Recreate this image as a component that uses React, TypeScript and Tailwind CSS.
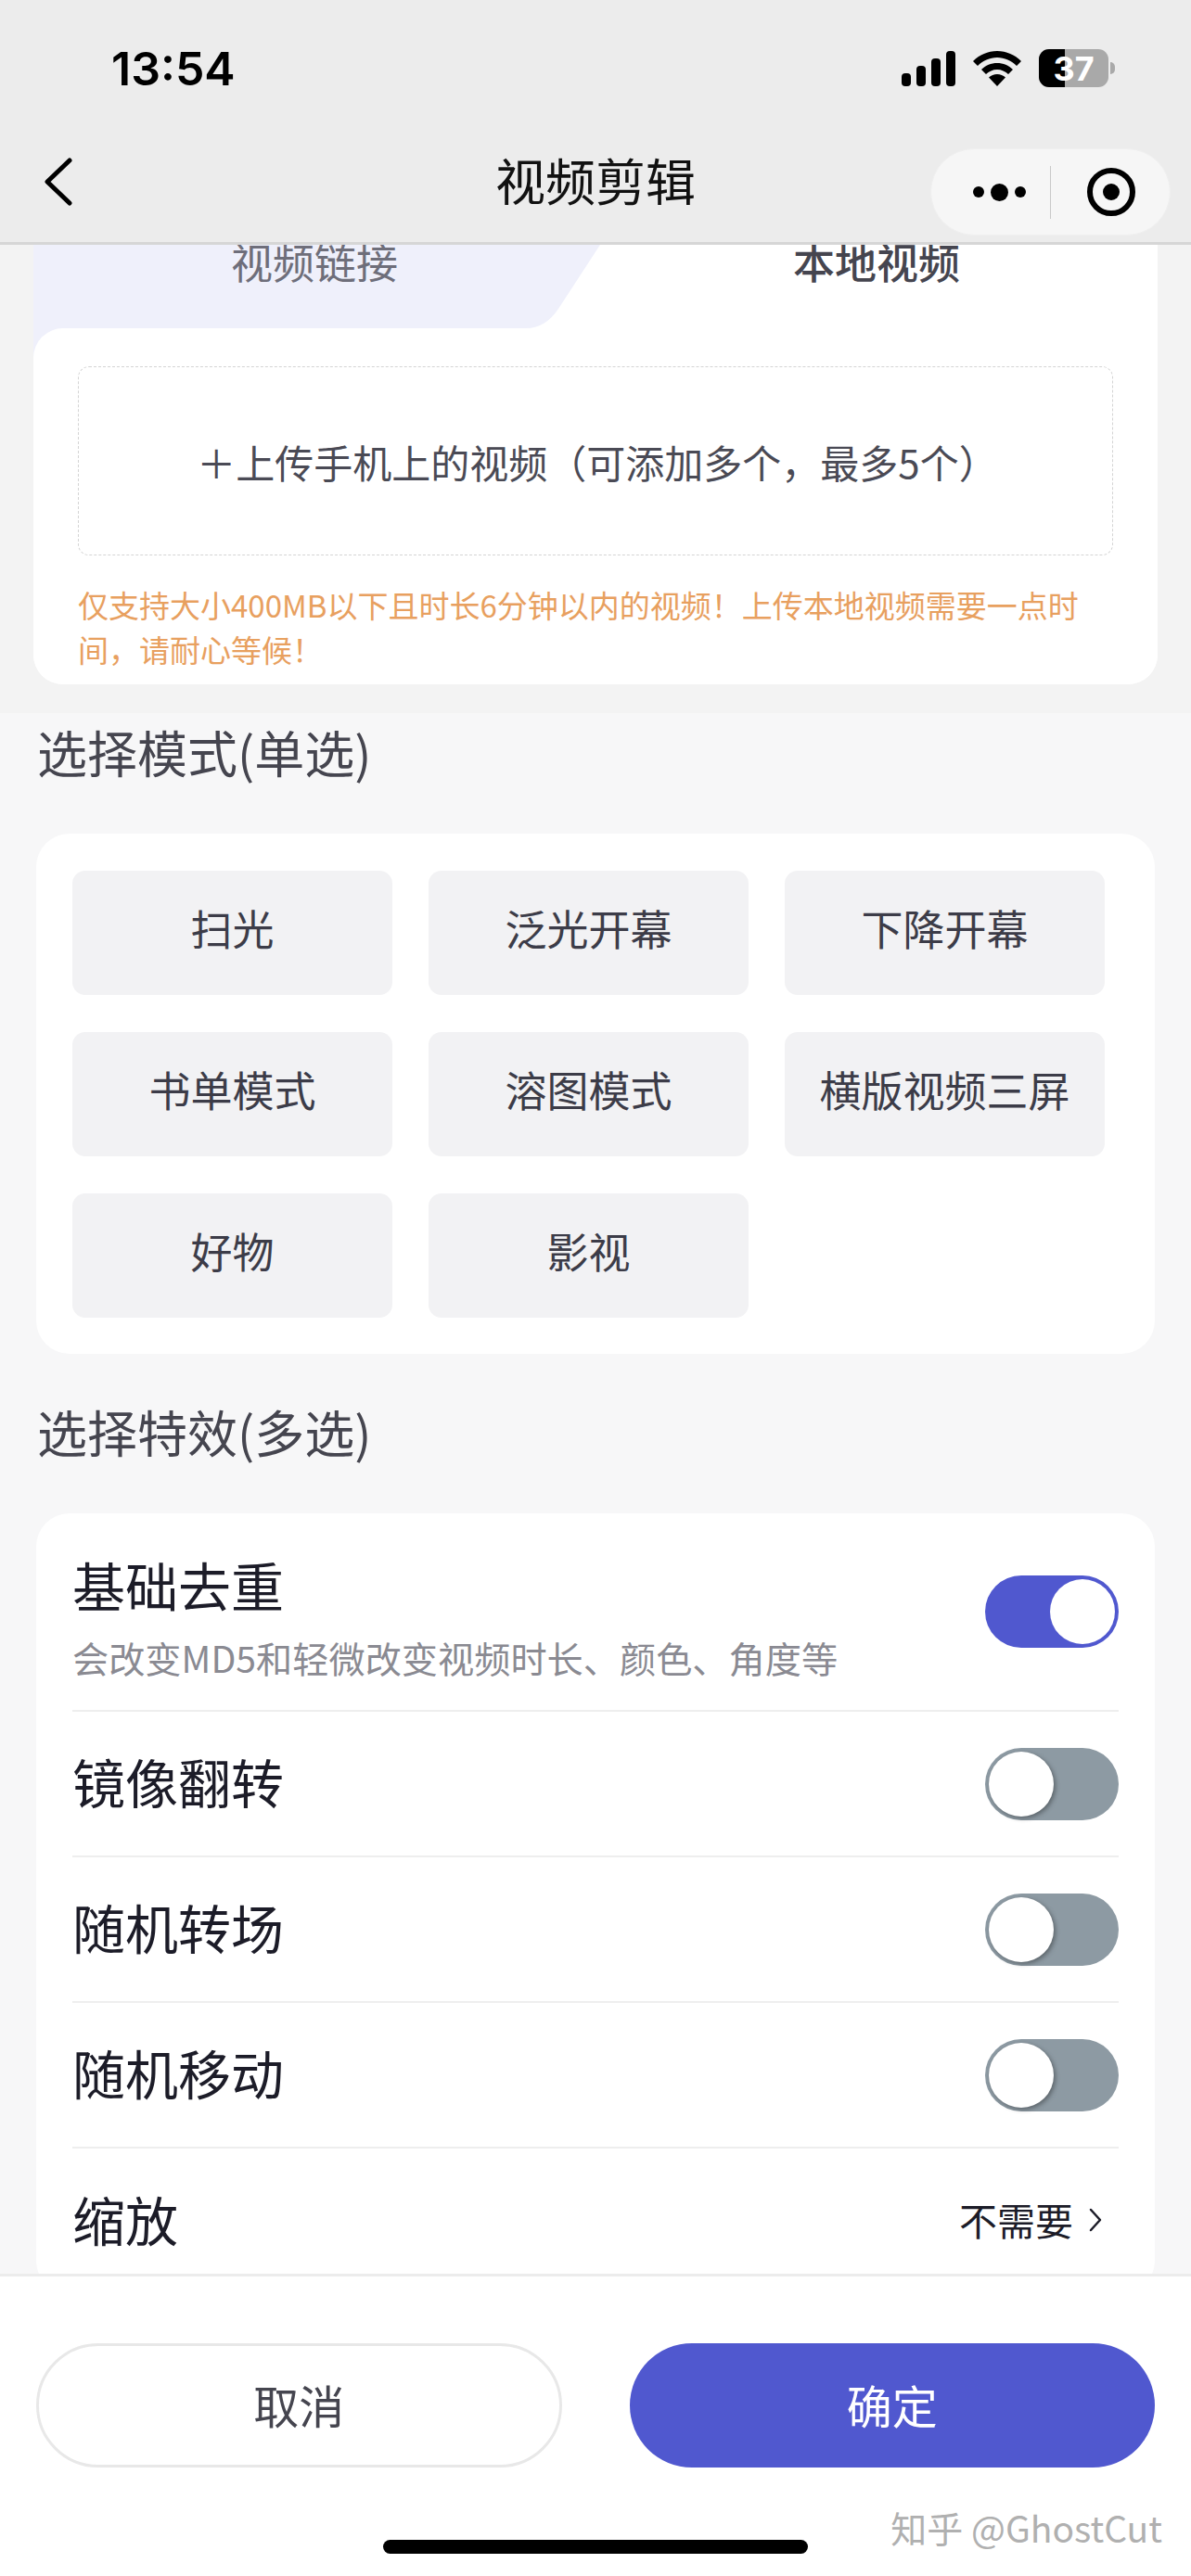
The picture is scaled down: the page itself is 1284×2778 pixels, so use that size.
const modes = ['扫光', '泛光开幕', '下降开幕', '书单模式', '溶图模式', '横版视频三屏', '好物', '影视'];
const effects = ['镜像翻转', '随机转场', '随机移动'];

function StatusIcons() {
  return (
    <div className="flex items-center">
      <svg width="58" height="38" viewBox="0 0 58 38" className="mr-[19px]" fill="#000">
        <rect x="0" y="24" width="10" height="14" rx="4" />
        <rect x="16" y="16" width="10" height="22" rx="4" />
        <rect x="32" y="8" width="10" height="30" rx="4" />
        <rect x="48" y="0" width="10" height="38" rx="4" />
      </svg>
      <svg width="52" height="38" viewBox="0 0 52 38" className="mr-[19px]" fill="#000">
        <path d="M26 0C16 0 7 4 0 11l5 5c5.500-5.500 13-9 21-9s15.500 3.500 21 9l5-5C45 4 36 0 26 0z" />
        <path d="M26 13c-6.500 0-12.500 2.500-17 7l5 5c3-3 7.500-5 12-5s9 2 12 5l5-5c-4.500-4.500-10.500-7-17-7z" />
        <path d="M26 25c-3.500 0-6.500 1.300-9 3.500L26 38l9-9.500C32.500 26.300 29.500 25 26 25z" />
      </svg>
      <div className="relative flex h-[41px] w-[75px] items-center justify-center overflow-hidden rounded-[11px] bg-[#a9a9a9]">
        <div className="absolute top-0 bottom-0 left-0 w-[28px] bg-black" />
        <span className="relative font-['Inter'] text-[36px] leading-none font-bold text-white">37</span>
      </div>
      <div className="ml-[2px] h-[13px] w-[5px] rounded-r-full bg-[#a9a9a9]" />
    </div>
  );
}

function Capsule() {
  return (
    <div className="flex h-[94px] w-[259px] items-center rounded-full border border-[#efefef] bg-[#f6f6f6]">
      <div className="flex w-[128px] items-center justify-end gap-[7px] pr-[26px]">
        <div className="size-[12px] rounded-full bg-black" />
        <div className="size-[19px] rounded-full bg-black" />
        <div className="size-[12px] rounded-full bg-black" />
      </div>
      <div className="h-[57px] w-px bg-[#c9c9c9]" />
      <div className="flex flex-1 justify-center pl-[1px]">
        <div className="flex size-[52px] items-center justify-center rounded-full border-[6px] border-black">
          <div className="size-[18px] rounded-full bg-black" />
        </div>
      </div>
    </div>
  );
}

function Toggle({ on }: { on?: boolean }) {
  if (on) {
    return (
      <div className="flex h-[78px] w-[144px] items-center justify-end rounded-full bg-[#5058cf] pr-[4px]">
        <div className="size-[70px] rounded-full bg-white" />
      </div>
    );
  }
  return (
    <div className="flex h-[78px] w-[144px] items-center rounded-full bg-[#8d9aa3] pl-[4px]">
      <div className="size-[70px] rounded-full bg-white shadow-[2px_2px_5px_rgba(0,0,0,0.35)]" />
    </div>
  );
}

function Heading({ children }: { children: string }) {
  return <h2 className="h-[70px] pl-[1px] text-[54px] leading-[64px] font-normal text-[#45454f]">{children}</h2>;
}

export default function App() {
  return (
    <div className="flex h-[2778px] w-[1284px] flex-col overflow-hidden bg-[#f7f7f8] font-['Noto_Sans_CJK_SC',sans-serif]">
      <header className="relative z-20 h-[264px] shrink-0 border-b-[3px] border-[#d6d6d6] bg-[#ececec]">
        <div className="flex h-[146px] items-center justify-between pt-[1px] pr-[82px] pl-[120px]">
          <span className="font-['Inter'] text-[50px] leading-none font-semibold text-black">13:54</span>
          <StatusIcons />
        </div>
        <div className="grid h-[115px] grid-cols-[1fr_auto_1fr] px-[22px]">
          <div className="flex items-start pt-[24px] pl-[24px]">
            <svg width="32" height="52" viewBox="0 0 32 52" fill="none" stroke="#000" strokeWidth="5" strokeLinecap="round" strokeLinejoin="round">
              <path d="M29 3 5 26l24 23" />
            </svg>
          </div>
          <div className="pt-[12px] text-[54px] leading-[72px] text-[#111]">视频剪辑</div>
          <div className="flex justify-end pt-[14px]">
            <Capsule />
          </div>
        </div>
      </header>

      <main className="flex-1 overflow-hidden">
        <section className="bg-[#f3f3f3] px-[36px] pb-[31px]">
          <div className="relative overflow-hidden rounded-b-[32px] bg-white">
            <svg className="absolute top-0 left-0" width="611" height="126" viewBox="0 0 611 126" fill="#eff0fb">
              <path d="M0 0H611L566 69Q552 90 531 90H32V126H0Z" />
            </svg>
            <div className="relative grid h-[90px] grid-cols-2 text-center text-[45px] leading-[36px]">
              <span className="text-[#6e6e7a]">视频链接</span>
              <span className="font-medium text-[#45454f]">本地视频</span>
            </div>
            <div className="relative rounded-t-[32px] bg-white px-[48px] pt-[41px] pb-[14px]">
              <div className="flex h-[204px] items-center justify-center rounded-[12px] border border-dashed border-[#d4d4d4] pl-[4px] text-[42px] text-[#4a4a55]">
                ＋上传手机上的视频（可添加多个，最多5个）
              </div>
              <p className="mt-[29px] text-[33px] leading-[48px] text-[#e8a05f]">
                仅支持大小400MB以下且时长6分钟以内的视频！上传本地视频需要一点时间，请耐心等候！
              </p>
            </div>
          </div>
        </section>

        <section className="px-[39px] pt-[10px]">
          <Heading>选择模式(单选)</Heading>
          <div className="mt-[50px] grid h-[561px] grid-cols-3 content-start gap-x-[39px] gap-y-[40px] rounded-[36px] bg-white pt-[40px] pr-[54px] pl-[39px]">
            {modes.map((m) => (
              <div key={m} className="flex h-[134px] items-center justify-center rounded-[14px] bg-[#f2f2f4] pb-[10px] text-[45px] text-[#3c3c48]">
                {m}
              </div>
            ))}
          </div>

          <div className="mt-[52px]">
            <Heading>选择特效(多选)</Heading>
          </div>
          <div className="mt-[50px] rounded-[36px] bg-white px-[39px]">
            <div className="flex h-[214px] items-center justify-between border-b-2 border-[#eeeeee]">
              <div className="pt-[5px]">
                <div className="text-[57px] leading-[76px] text-[#1c1c28]">基础去重</div>
                <div className="mt-[17px] text-[39.200px] leading-[48px] text-[#8a8a92]">会改变MD5和轻微改变视频时长、颜色、角度等</div>
              </div>
              <Toggle on />
            </div>
            {effects.map((e) => (
              <div key={e} className="flex h-[157px] items-center justify-between border-b-2 border-[#eeeeee]">
                <span className="pb-[6px] text-[57px] text-[#1c1c28]">{e}</span>
                <Toggle />
              </div>
            ))}
            <div className="flex h-[157px] items-center justify-between">
              <span className="pb-[6px] text-[57px] text-[#1c1c28]">缩放</span>
              <div className="flex items-center gap-[17px] pr-[18px] pb-[4px] text-[41px] text-[#1c1c28]">
                不需要
                <svg width="14" height="26" viewBox="0 0 14 26" fill="none" stroke="#1c1c28" strokeWidth="2.500" strokeLinecap="round" strokeLinejoin="round">
                  <path d="M2 2l10 11L2 24" />
                </svg>
              </div>
            </div>
          </div>
        </section>
      </main>

      <footer className="relative z-20 flex h-[326px] shrink-0 flex-col border-t-[3px] border-[#ececec] bg-white px-[39px] pt-[72px]">
        <div className="grid grid-cols-2 gap-[73px]">
          <button className="h-[134px] rounded-full border-[3px] border-[#e8e8e8] bg-white pb-[2px] text-[49px] text-[#45454f]">取消</button>
          <button className="h-[134px] rounded-full bg-[#5058cf] pb-[2px] text-[49px] text-white">确定</button>
        </div>
        <div className="mt-[78px] h-[15px] w-[458px] self-center rounded-full bg-black" />
        <span className="absolute right-[31px] bottom-[33px] text-[39px] leading-none text-[#b0b0b0]">知乎 @GhostCut</span>
      </footer>
    </div>
  );
}
